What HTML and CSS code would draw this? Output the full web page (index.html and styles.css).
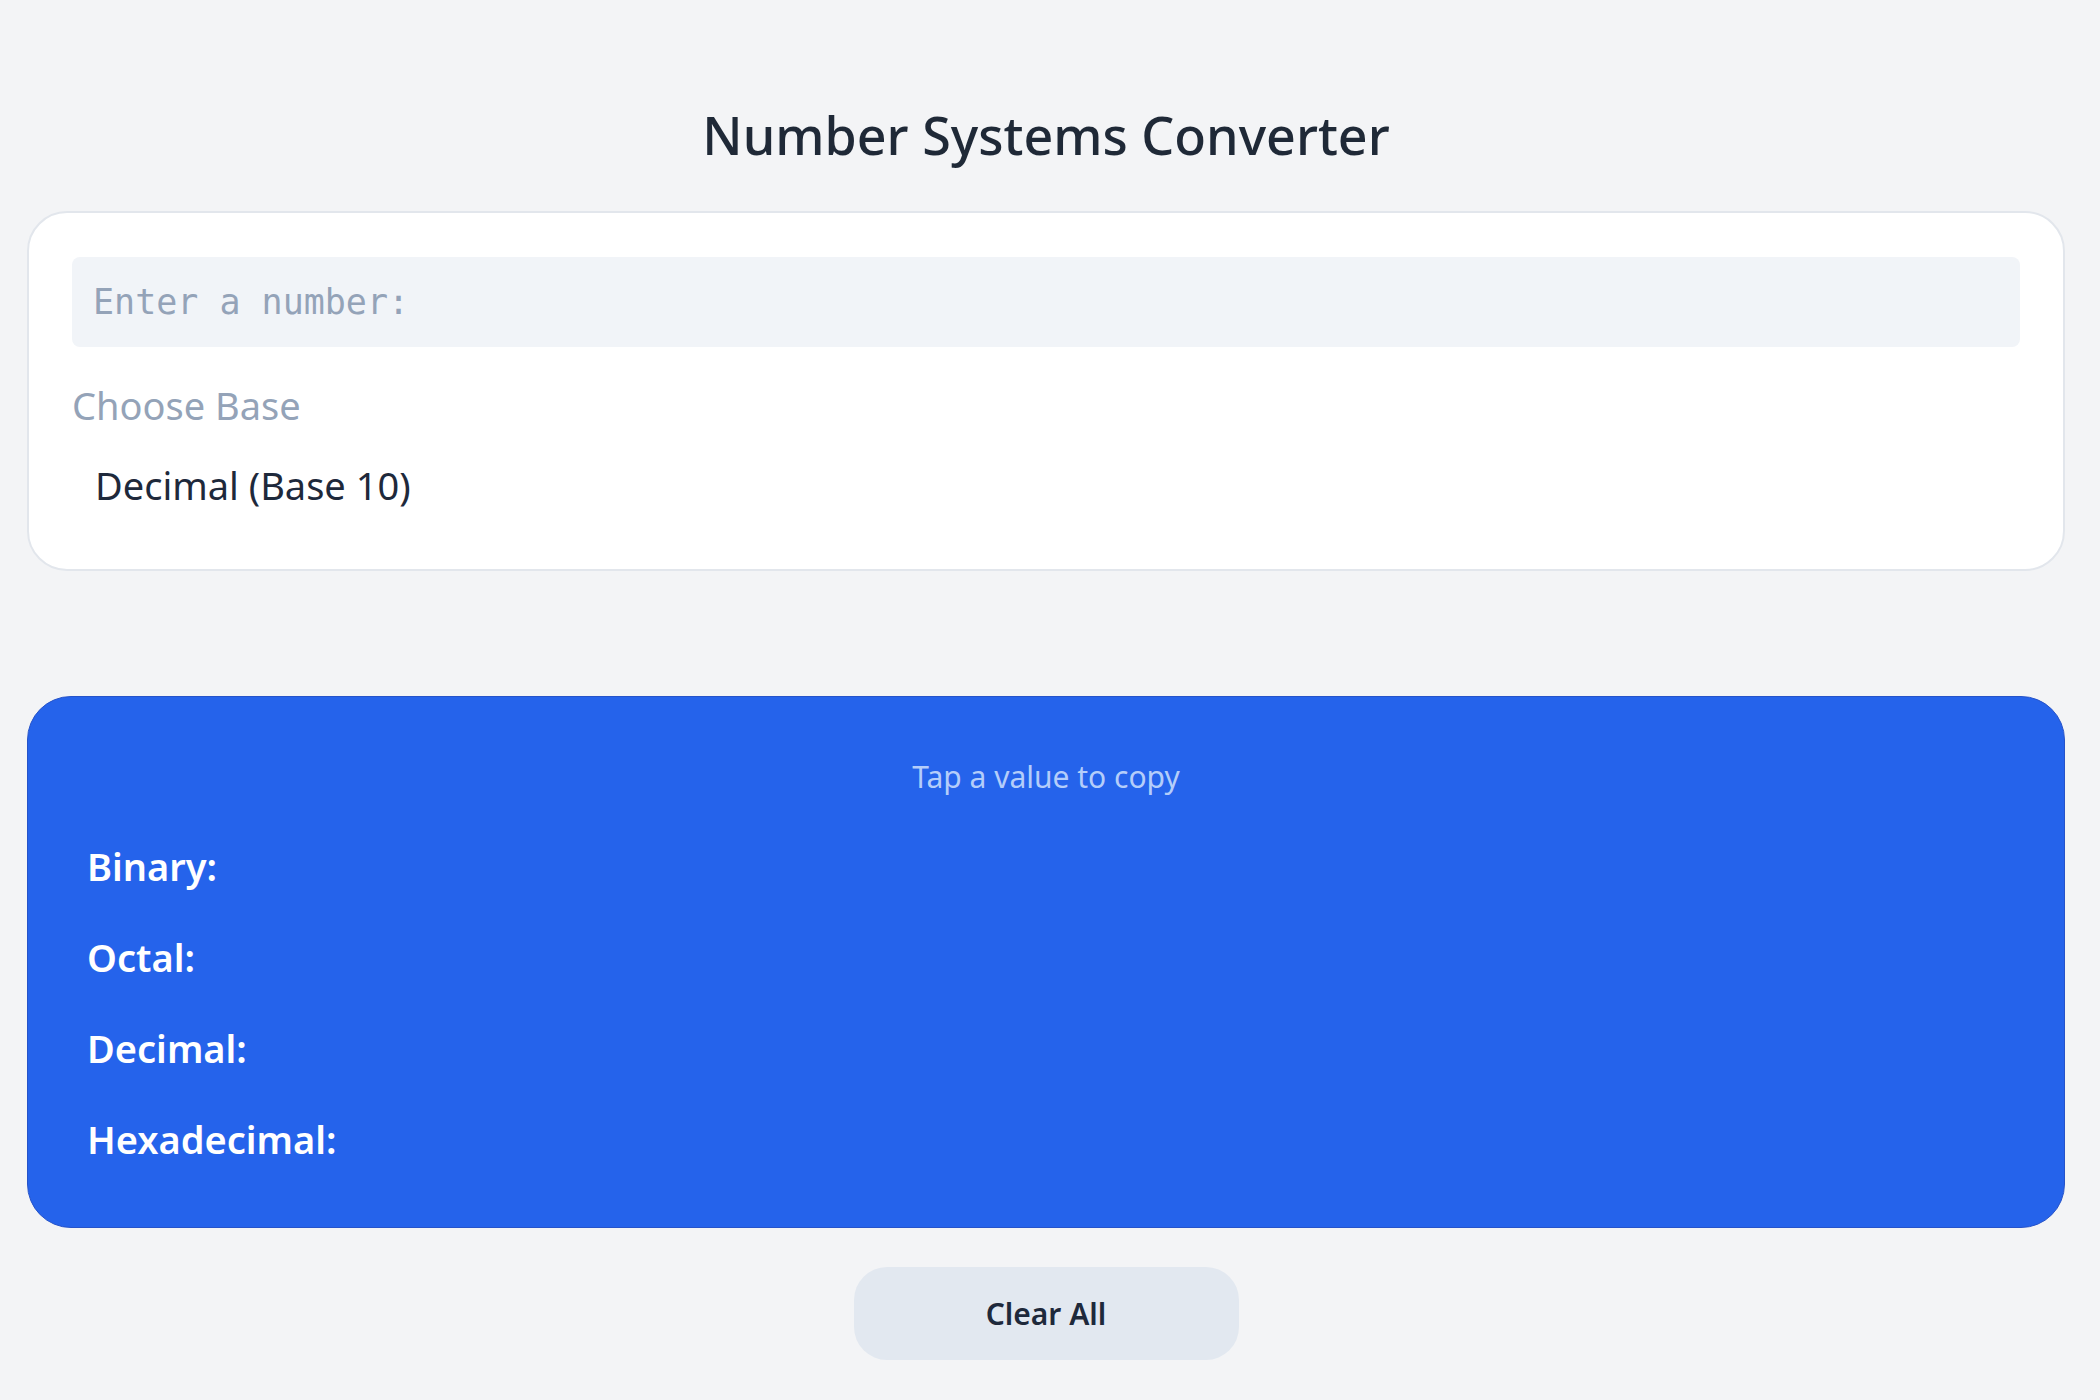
FILE: index.html
```html
<!DOCTYPE html>
<html lang="en">
<head>
<meta charset="utf-8">
<title>Number Systems Converter</title>
<link rel="stylesheet" href="styles.css">
</head>
<body>
<main class="page">
  <h1 class="title">Number Systems Converter</h1>
  <section class="card">
    <input class="number-input" type="text" placeholder="Enter a number:">
    <label class="base-label">Choose Base</label>
    <div class="base-select">Decimal (Base 10)</div>
  </section>
  <section class="results">
    <p class="hint">Tap a value to copy</p>
    <div class="rows">
      <div class="row"><span class="row-label">Binary:</span><span class="row-value"></span></div>
      <div class="row"><span class="row-label">Octal:</span><span class="row-value"></span></div>
      <div class="row"><span class="row-label">Decimal:</span><span class="row-value"></span></div>
      <div class="row"><span class="row-label">Hexadecimal:</span><span class="row-value"></span></div>
    </div>
  </section>
  <div class="actions">
    <button class="clear-btn" type="button">Clear All</button>
  </div>
</main>
</body>
</html>
```

FILE: styles.css
```css
* { box-sizing: border-box; }

html, body {
  margin: 0;
  padding: 0;
  background: #f3f4f6;
  font-family: "Noto Sans", "Open Sans", sans-serif;
  color: #1e293b;
}

.page {
  padding: 103px 35px 20px 27px;
  display: flex;
  flex-direction: column;
}

.title {
  margin: 0;
  text-align: center;
  font-size: 52px;
  line-height: 64px;
  font-weight: 500;
  color: #1f2937;
}

.card {
  margin-top: 44px;
  background: #ffffff;
  border: 2px solid #e2e6ec;
  border-radius: 40px;
  padding: 44px 43px 51px;
  display: flex;
  flex-direction: column;
}

.number-input {
  display: block;
  width: 100%;
  height: 90px;
  border: none;
  outline: none;
  border-radius: 8px;
  background: #f1f4f8;
  padding: 0 21px;
  font-family: "DejaVu Sans Mono", "Liberation Mono", monospace;
  font-size: 35px;
  color: #1e293b;
}

.number-input::placeholder {
  color: #94a3b8;
}

.base-label {
  margin-top: 32px;
  font-size: 38px;
  line-height: 52px;
  color: #94a3b8;
}

.base-select {
  margin-top: 21px;
  padding: 7px 23px;
  font-size: 38px;
  line-height: 52px;
  color: #1e293b;
}

.results {
  margin-top: 125px;
  background: #2563eb;
  border: 1px solid #2653c9;
  border-radius: 44px;
  padding: 60px 59px 62px;
  color: #ffffff;
}

.hint {
  margin: 0;
  text-align: center;
  font-size: 30px;
  line-height: 40px;
  color: #b4cdfa;
}

.rows {
  margin-top: 43px;
  display: flex;
  flex-direction: column;
  gap: 39px;
}

.row {
  display: flex;
  gap: 16px;
  font-size: 38px;
  line-height: 52px;
  font-weight: 600;
}

.actions {
  margin-top: 39px;
  display: flex;
  justify-content: center;
}

.clear-btn {
  width: 385px;
  height: 93px;
  border: none;
  border-radius: 33px;
  background: #e2e8f0;
  color: #1e293b;
  font-family: "Noto Sans", "Open Sans", sans-serif;
  font-size: 30px;
  line-height: 40px;
  font-weight: 600;
  cursor: pointer;
}
```
